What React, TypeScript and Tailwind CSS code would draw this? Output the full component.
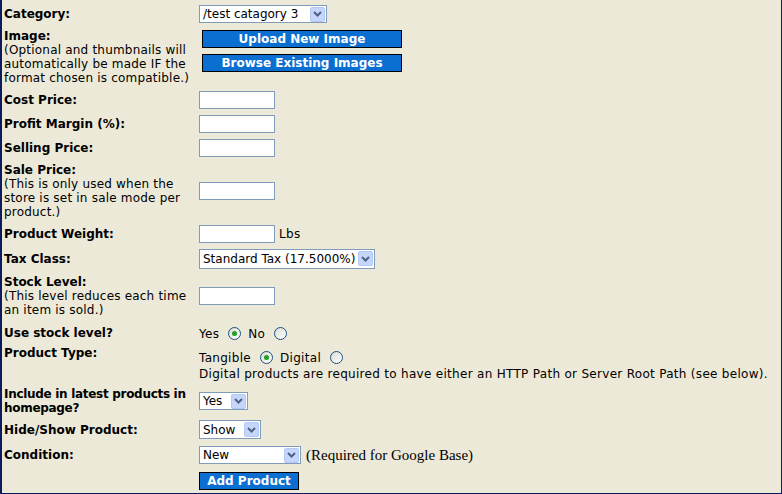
const font = { fontFamily: '"DejaVu Sans", Verdana, sans-serif' }

function Arrow() {
  return (
    <span className="flex h-[15px] w-[15px] shrink-0 items-center justify-center rounded-[2px] border border-[#b4c8f6] bg-[#c6d6fa]">
      <svg width="9" height="6" viewBox="0 0 9 6">
        <path d="M1 1 L4.5 4.5 L8 1" fill="none" stroke="#4d6185" strokeWidth="2" />
      </svg>
    </span>
  )
}

function Select({ value, width, height = 18 }: { value: string; width: number; height?: number }) {
  return (
    <div
      className="flex items-center justify-between border border-[#7f9db9] bg-white pl-[3px] pr-[1px] text-[12px] tracking-normal text-black"
      style={{ width, height }}
    >
      <span className="whitespace-nowrap leading-none">{value}</span>
      <Arrow />
    </div>
  )
}

function TextBox() {
  return <div className="h-[18px] w-[76px] border border-[#7f9db9] bg-white" />
}

function Radio({ checked }: { checked?: boolean }) {
  return (
    <span className="ml-[9px] mr-[7px] inline-flex h-[13px] w-[13px] shrink-0 items-center justify-center rounded-full border border-[#1c5180] bg-gradient-to-br from-[#dcdcd6] to-white">
      {checked && <span className="h-[5px] w-[5px] rounded-full bg-[#21a121]" />}
    </span>
  )
}

function BlueButton({ label, width }: { label: string; width: number }) {
  return (
    <div
      className="flex h-[18px] items-center justify-center border border-black bg-[#0b6fd1] text-[12px] font-bold leading-none tracking-normal text-white"
      style={{ width }}
    >
      {label}
    </div>
  )
}

function Row({
  h,
  label,
  note,
  top,
  children,
}: {
  h: number
  label: React.ReactNode
  note?: string
  top?: boolean
  children?: React.ReactNode
}) {
  return (
    <div className="flex" style={{ height: h }}>
      <div className={`w-[197px] shrink-0 pl-[2px] pr-[6px] ${top ? '' : 'flex flex-col justify-center'}`}>
        <div className="text-[12px] font-bold leading-[14px] tracking-normal text-black">{label}</div>
        {note && <div className="text-[12px] leading-[14px] tracking-[0.2px] text-black">{note}</div>}
      </div>
      <div className="flex flex-1 items-center">{children}</div>
    </div>
  )
}

export default function App() {
  return (
    <div className="h-[494px] w-[782px] overflow-hidden border-b border-l-2 border-r border-[#0c1b5e] bg-[#ece9d8]" style={font}>
      <div className="flex flex-col gap-[2px] pt-[3px] text-[12px] tracking-[0.3px] text-black">
        <Row h={22} label="Category:">
          <Select value="/test catagory 3" width={128} />
        </Row>
        <Row h={60} label="Image:" note="(Optional and thumbnails will automatically be made IF the format chosen is compatible.)">
          <div className="flex flex-col gap-[6px] self-start pl-[3px] pt-[3px]">
            <BlueButton label="Upload New Image" width={200} />
            <BlueButton label="Browse Existing Images" width={200} />
          </div>
        </Row>
        <Row h={22} label="Cost Price:">
          <TextBox />
        </Row>
        <Row h={22} label="Profit Margin (%):">
          <TextBox />
        </Row>
        <Row h={22} label="Selling Price:">
          <TextBox />
        </Row>
        <Row h={59} label="Sale Price:" note="(This is only used when the store is set in sale mode per product.)">
          <TextBox />
        </Row>
        <Row h={23} label="Product Weight:">
          <TextBox />
          <span className="ml-[4px]">Lbs</span>
        </Row>
        <Row h={23} label="Tax Class:">
          <Select value="Standard Tax (17.5000%)" width={176} height={20} />
        </Row>
        <Row h={48} label="Stock Level:" note="(This level reduces each time an item is sold.)">
          <TextBox />
        </Row>
        <Row h={22} label="Use stock level?">
          <span className="pt-[2px]">Yes</span>
          <Radio checked />
          <span className="pt-[2px]">No</span>
          <Radio />
        </Row>
        <Row h={38} label="Product Type:" top>
          <div className="flex flex-col self-start pt-[3px]">
            <div className="flex h-[17px] items-center">
              Tangible
              <Radio checked />
              Digital
              <Radio />
            </div>
            <div className="whitespace-nowrap leading-[16px]">
              Digital products are required to have either an HTTP Path or Server Root Path (see below).
            </div>
          </div>
        </Row>
        <Row
          h={30}
          label={
            <span className="whitespace-nowrap tracking-[-0.3px]">
              Include in latest products in
              <br />
              homepage?
            </span>
          }
        >
          <Select value="Yes" width={49} />
        </Row>
        <Row h={23} label="Hide/Show Product:">
          <Select value="Show" width={62} height={19} />
        </Row>
        <Row h={24} label="Condition:">
          <Select value="New" width={102} />
          <span className="ml-[5px] whitespace-nowrap text-[15px] tracking-normal" style={{ fontFamily: '"Liberation Serif", serif' }}>
            (Required for Google Base)
          </span>
        </Row>
        <Row h={23} label="">
          <BlueButton label="Add Product" width={100} />
        </Row>
      </div>
    </div>
  )
}
